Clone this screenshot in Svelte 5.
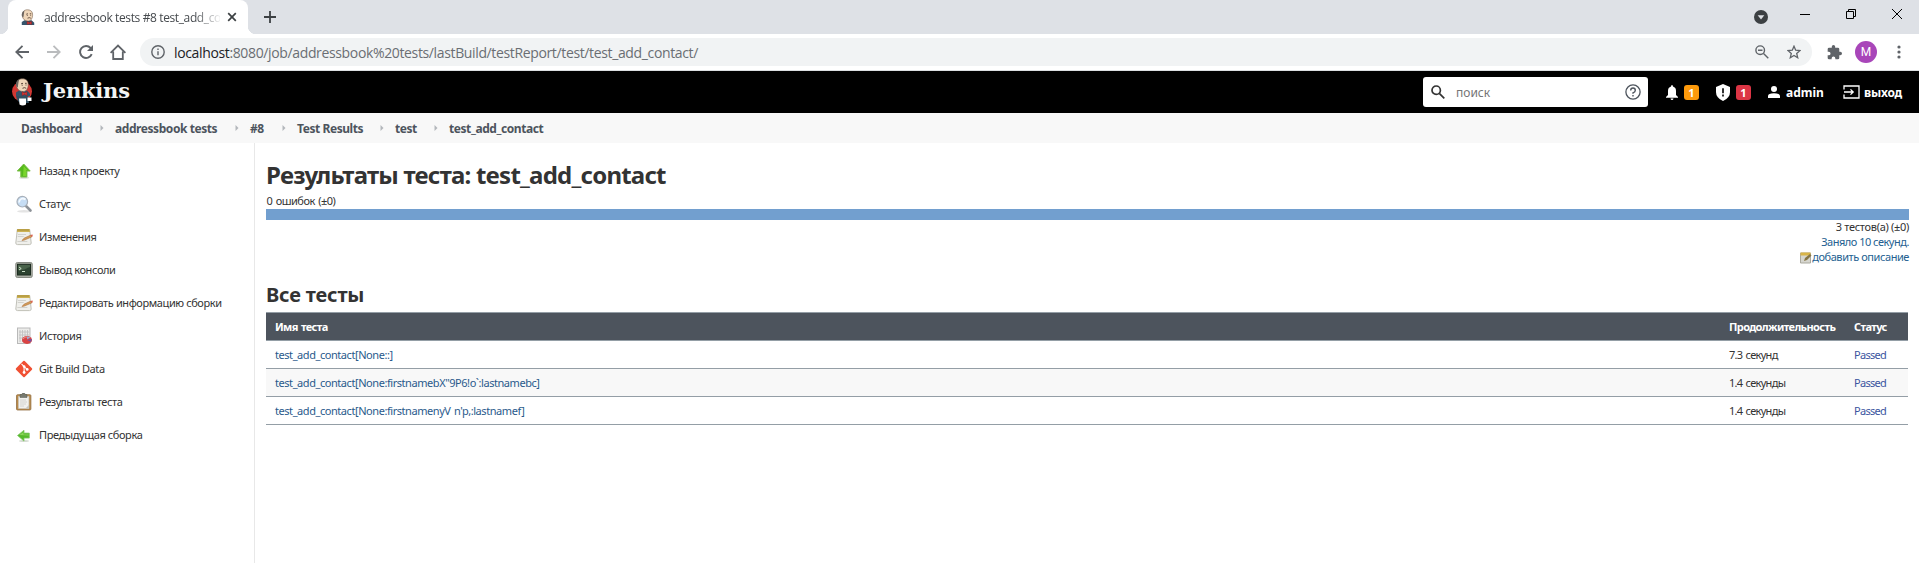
<script>
  const crumbs = [
    ['Dashboard', 61, 18], ['addressbook tests', 102, 18], ['#8', 14, 18],
    ['Test Results', 65, 18], ['test', 22, 17], ['test_add_contact', 95, 0]
  ];
  const tasks = [
    ['up', 'Назад к проекту'], ['search', 'Статус'], ['note', 'Изменения'],
    ['terminal', 'Вывод консоли'], ['note', 'Редактировать информацию сборки'],
    ['graph', 'История'], ['git', 'Git Build Data'], ['clip', 'Результаты теста'],
    ['left', 'Предыдущая сборка']
  ];
  const rows = [
    ['test_add_contact[None::]', '7.3 секунд'],
    ['test_add_contact[None:firstnamebX"9P6!o`:lastnamebc]', '1.4 секунды'],
    ["test_add_contact[None:firstnamenyV n'p,:lastnamef]", '1.4 секунды']
  ];
</script>

{#snippet butler()}
  <path d="M3 18v-3.500l3-2 8 0 3 3V18z" fill="#35546b" />
  <path d="M3.500 7C3.500 2.500 6 .8 9.500.8c4 0 6 2.500 5.700 6.200-.2 4-2 6.500-5 6.500C6.500 13.500 3.500 11 3.500 7z" fill="#efd6b9" stroke="#6e5648" stroke-width=".6" />
  <path d="M3.200 8C2.500 4.500 4 2 6.300 1.500 5.500 3 5.500 5 4.800 9.500z" fill="#6a6460" />
  <path d="M8 5.800l2-.5M12 5.300h1.700M8.700 7.200h1M12.500 7h1M9.500 10.300q2-1.300 3.700 0" stroke="#4b352b" stroke-width=".9" fill="none" />
  <path d="M9 13.800l2.500 1.200 2.500-1.200v3.700l-2.500-1-2.500 1z" fill="#d33833" stroke="#841b20" stroke-width=".5" />
{/snippet}

{#snippet icon(name)}
  <svg class="task-icon" width="18" height="18" viewBox="0 0 18 18" fill="none">
    {#if name === 'up'}
      <ellipse cx="9" cy="15.8" rx="5" ry="1" fill="#d7ddd4" />
      <path d="M8.700 2l6.500 7h-3.300v6H5.800V9H2.300z" fill="#55b91d" stroke="#78bd45" />
      <path d="M8.700 4l4 4.200H11V14H8z" fill="#79d52d" />
    {:else if name === 'left'}
      <ellipse cx="9" cy="15" rx="5" ry="1" fill="#d7ddd4" />
      <path d="M2.500 9.500L9 4.200v2.900h5.300v5H9v3z" fill="#55b92b" stroke="#84c86a" stroke-width=".8" />
      <path d="M4.500 9l4-3v2.400h5v1z" fill="#8bd65a" />
    {:else if name === 'search'}
      <ellipse cx="9" cy="16.300" rx="7" ry="1.200" fill="#e4e4e4" />
      <path d="M11 11l4.500 4.500" stroke="#8d9298" stroke-width="2.600" stroke-linecap="round" />
      <circle cx="7.300" cy="6.700" r="5.300" fill="#c6ddf4" stroke="#a8b0ba" stroke-width="1.200" />
      <path d="M4 7.500C4.500 3.500 8 2.500 10.500 4.500" stroke="#f5faff" stroke-width="1.800" />
    {:else if name === 'note'}
      <path d="M2.300 1.500h12.400l1.500 13.500q0 1.600-1.700 1.600H2.500Q.8 16.600.8 15z" fill="#efefeb" stroke="#c0c0b8" />
      <path d="M2.300 1h12.400l.4 3H1.900z" fill="#cdb355" />
      <path d="M3 1v2m2-2v2m2-2v2m2-2v2m2-2v2m2-2v2" stroke="#8b7425" stroke-width=".6" />
      <path d="M3 6.500h8m-8.300 2h6m-6.300 5h10" stroke="#d2d2cd" />
      <path d="M7 12.500l2-2.300L16 7l1 1.800L9.500 12z" fill="#d39c56" stroke="#ad713e" stroke-width=".6" />
      <path d="M15.500 7.200l1.800-.9.500 1.800-1.300.9z" fill="#d96555" />
    {:else if name === 'terminal'}
      <rect x=".8" y="1.500" width="16.400" height="15" rx="1.500" fill="#aaaea5" stroke="#868a82" />
      <rect x="2.500" y="3.300" width="13" height="10.700" fill="#2c4230" stroke="#1d2c21" />
      <path d="M3 9c6 1 8-2 12-3V4H3z" fill="#486249" />
      <path d="M4 6l2.200 1.500L4 9M7 10.500h3" stroke="#dcf1d8" stroke-width=".9" />
    {:else if name === 'graph'}
      <rect x="2.500" y="1" width="12.500" height="15.500" fill="#ececea" stroke="#b9b9b9" />
      <path d="M5 3v12M7.500 3v12M10 3v12M12.500 3v12M4 5h10M4 8h10M4 11h10" stroke="#c2c2c2" stroke-width=".9" />
      <ellipse cx="12" cy="13" rx="5" ry="3.900" fill="#d94343" />
      <path d="M12 12.500V9.200l3.600 1.200z" fill="#9fa7cc" />
      <path d="M12 13l5-1-1 3z" fill="#7652a0" />
      <path d="M8 12q2-2.500 4-2" stroke="#ee8e85" />
    {:else if name === 'git'}
      <rect x="2.900" y="2.900" width="12.200" height="12.200" rx="1" transform="rotate(45 9 9)" fill="#f05033" />
      <path d="M6.500 3.800l2.600 2.800v6M9.300 6.600l3 3" stroke="#fff" stroke-width="1.100" />
      <g fill="#fff"><circle cx="9.100" cy="6.500" r="1.300" /><circle cx="9.100" cy="12.500" r="1.400" /><circle cx="12.200" cy="9.400" r="1.400" /></g>
    {:else}
      <rect x="1.500" y="1.700" width="14.400" height="15.300" rx="1" fill="#b98a49" stroke="#937044" stroke-width=".8" />
      <path d="M3.500 3.300h10.400v12.200H3.500z" fill="#f1f1ee" stroke="#c9c9c5" stroke-width=".6" />
      <path d="M5 1.500h2L7.500 0h2L10 1.500h2v3H5z" fill="#777a70" stroke="#55584f" stroke-width=".5" />
      <path d="M5 7h6M5 9h7M5 11h6M5 13h4" stroke="#d4d4d0" />
      <path d="M10.500 15.500l3.400-3.400v3.400z" fill="#c5c5bf" />
    {/if}
  </svg>
{/snippet}

<div class="page">
  <div class="tabs">
    <div class="tab">
      <svg class="favicon" width="16" height="17" viewBox="1 0 18 19">{@render butler()}</svg>
      <span class="tab-title">addressbook tests #8 test_add_co</span>
      <svg class="close" width="10" height="10" viewBox="0 0 10 10"><path d="M1.200 1.200l7.600 7.600m0-7.600L1.200 8.800" stroke="#3c4043" stroke-width="1.700" /></svg>
    </div>
    <svg class="plus" width="14" height="14" viewBox="0 0 14 14"><path d="M7 1v12M1 7h12" stroke="#3c4043" stroke-width="1.800" /></svg>
    <div class="window">
      <svg width="14" height="14" viewBox="0 0 14 14"><circle cx="7" cy="7" r="7" fill="#3c4043" /><path d="M3.700 5.300h6.600L7 9.500z" fill="#dee1e6" /></svg>
      <svg width="10" height="10" viewBox="0 0 10 10"><path d="M0 5.500h10" stroke="#000" /></svg>
      <svg width="10" height="10" viewBox="0 0 10 10" fill="none" stroke="#000"><path d="M.5 2.500h7v7h-7zM2.500 2.500v-2h7v7h-2" /></svg>
      <svg width="10" height="10" viewBox="0 0 10 10"><path d="M0 0l10 10m0-10L0 10" stroke="#000" /></svg>
    </div>
  </div>

  <div class="toolbar">
    <svg width="14" height="14" viewBox="0 0 14 14" fill="none" stroke="#5f6368" stroke-width="1.800"><path d="M14 7H1.500M7.500 .8L1.300 7l6.200 6.200" /></svg>
    <svg width="14" height="14" viewBox="0 0 14 14" fill="none" stroke="#babcbe" stroke-width="1.800"><path d="M0 7h12.500M6.500 .8L12.700 7l-6.200 6.200" /></svg>
    <svg width="14" height="14" viewBox="0 0 14 14" fill="none" stroke="#5f6368" stroke-width="1.900"><path d="M12.700 9.200A6 6 0 1 1 11.600 3L13 4.800" /><path d="M14 0v6H8z" fill="#5f6368" stroke="none" /></svg>
    <svg width="16" height="16" viewBox="0 0 16 16" fill="none" stroke="#5f6368" stroke-width="1.800"><path d="M.6 8.800L8 1.500l7.400 7.300M3.200 7.500V15h9.600V7.500" /></svg>
    <div class="address">
      <svg width="14" height="14" viewBox="0 0 14 14" fill="none" stroke="#5f6368" stroke-width="1.400"><circle cx="7" cy="7" r="6.200" /><path d="M7 6.300v4M7 3.500v1.500" /></svg>
      <span class="url"><b>localhost</b>:8080/job/addressbook%20tests/lastBuild/testReport/test/test_add_contact/</span>
      <svg width="14" height="14" viewBox="0 0 14 14" fill="none" stroke="#5f6368" stroke-width="1.400"><circle cx="5.200" cy="5.200" r="4.300" /><path d="M8.500 8.500l4.800 4.800M3 5.200h4.500" /></svg>
      <svg class="star" width="14" height="14" viewBox="0 0 14 14" fill="none" stroke="#5f6368" stroke-width="1.300"><path d="M7 1.200l1.700 4 4.300.4-3.300 2.800 1 4.300L7 10.400l-3.700 2.300 1-4.300L1 5.600l4.300-.4z" /></svg>
    </div>
    <svg class="puzzle" width="15" height="15" viewBox="1 1 22 22" fill="#5f6368"><path d="M20.500 11H19V7a2 2 0 0 0-2-2h-4V3.500a2.500 2.500 0 0 0-5 0V5H4a2 2 0 0 0-2 2v3.800h1.500a2.700 2.700 0 0 1 0 5.400H2V20a2 2 0 0 0 2 2h3.800v-1.500a2.700 2.700 0 0 1 5.400 0V22H17a2 2 0 0 0 2-2v-4h1.500a2.500 2.500 0 0 0 0-5z" /></svg>
    <span class="avatar">M</span>
    <svg class="dots" width="4" height="14" viewBox="0 0 4 14" fill="#5f6368"><circle cx="2" cy="2" r="1.600" /><circle cx="2" cy="7" r="1.600" /><circle cx="2" cy="12" r="1.600" /></svg>
  </div>

  <header>
    <svg class="logo" width="22" height="30" viewBox="0 0 22 30">
      <circle cx="11" cy="14.500" r="10" fill="#d33833" />
      <path d="M5 17l5-2 7 1 1 10H9q-4-3-4-9z" fill="#335061" />
      <g transform="translate(2 1)">{@render butler()}</g>
      <path d="M8 21.500h7v6q-3.500 2-6.500 0zM16.500 20.500h4v3.500h-4z" fill="#fff" />
    </svg>
    <span class="brand">Jenkins</span>
    <div class="search">
      <svg width="14" height="14" viewBox="0 0 14 14" fill="none" stroke="#333" stroke-width="1.700"><circle cx="5.200" cy="5.200" r="4.200" /><path d="M8.300 8.300l5 5" /></svg>
      <span>поиск</span>
      <svg width="16" height="16" viewBox="0 0 16 16" fill="none" stroke="#4d545d" stroke-width="1.300"><circle cx="8" cy="8" r="7.100" /><path d="M5.700 6.500Q5.700 4 8 4t2.300 2.200Q10.300 8 8 8.800v1M8 11v1.500" stroke-width="1.400" /></svg>
    </div>
    <svg class="bell" width="12" height="15" viewBox="0 0 12 15" fill="#fff"><path d="M6 0q1 0 1 1.600 3 1 3 4.400v4l2 2v.8H0V12l2-2V6q0-3.400 3-4.400Q5 0 6 0zM4.500 13.400h3Q7.300 15 6 15t-1.500-1.600z" /></svg>
    <span class="badge amber">1</span>
    <svg class="shield" width="14" height="17" viewBox="0 0 14 17"><path d="M7 0l7 3v5q0 6-7 9-7-3-7-9V3z" fill="#fff" /><path d="M7 4.300v5M7 10.600v1.800" stroke="#000" stroke-width="1.600" /></svg>
    <span class="badge red">1</span>
    <svg class="user" width="12" height="12" viewBox="0 0 12 12" fill="#fff"><circle cx="6" cy="3" r="3" /><path d="M0 12v-2q0-2.800 6-2.800T12 10v2z" /></svg>
    <span class="admin">admin</span>
    <svg class="exit" width="17" height="14" viewBox="0 0 17 14" fill="none" stroke="#fff" stroke-width="1.300"><path d="M1 4.500V1h15v12H1V9.500M1 7h9M7.500 4.400L10.200 7l-2.700 2.600" /></svg>
    <span class="logout">выход</span>
  </header>

  <nav>
    {#each crumbs as [label, width, gap]}
      <span class="crumb" style="width:{width}px">{label}</span>
      {#if gap}
        <svg style="margin-left:{gap}px" width="4" height="6" viewBox="0 0 4 6"><path d="M.5 0L3.500 3 .5 6z" fill="#b3b7bb" /></svg>
      {/if}
    {/each}
  </nav>

  <div class="body">
    <aside>
      {#each tasks as [name, label]}
        <div class="task">{@render icon(name)}<span>{label}</span></div>
      {/each}
    </aside>
    <main>
      <h1>Результаты теста: test_add_contact</h1>
      <div class="fails">0 ошибок (±0)</div>
      <div class="bar"></div>
      <div class="summary">
        <div><span class="total">3 тестов(а) (±0)</span></div>
        <div><span class="link took">Заняло 10 секунд.</span></div>
        <div>
          <svg class="edit" width="12" height="12" viewBox="0 0 12 12"><path d="M.5 1h10v10H.5z" fill="#d6d6cf" stroke="#aaa99e" /><path d="M.5.5h10v3H.5z" fill="#d9b548" /><path d="M4 9l1-3 5-4 1.500 1.500L7 8z" fill="#857544" /></svg><span class="link describe">добавить описание</span>
        </div>
      </div>
      <h2>Все тесты</h2>
      <table>
        <thead><tr><th>Имя теста</th><th class="dur">Продолжительность</th><th class="st">Статус</th></tr></thead>
        <tbody>
          {#each rows as [name, dur]}
            <tr><td class="name">{name}</td><td>{dur}</td><td class="passed">Passed</td></tr>
          {/each}
        </tbody>
      </table>
    </main>
  </div>
</div>

<style>
  :global(body) { background: #fff; }
  .page { width: 1919px; height: 563px; overflow: hidden; font-family: "Noto Sans", sans-serif; font-size: 11px; color: #333; box-sizing: border-box; display: flex; flex-direction: column; }
  svg { display: block; flex: none; }
  span { white-space: nowrap; }

  .tabs { height: 34px; flex: none; background: #dee1e6; display: flex; align-items: flex-start; padding-left: 8px; }
  .tab { width: 240px; height: 34px; box-sizing: border-box; background: #fff; border-radius: 8px 8px 0 0; display: flex; align-items: center; padding-left: 12px; font: 12px "Open Sans", sans-serif; color: #45494d; position: relative; }
  .tab::before, .tab::after { content: ""; position: absolute; bottom: 0; width: 8px; height: 8px; }
  .tab::before { left: -8px; background: radial-gradient(circle at 0 0, #dee1e6 8px, #fff 8.5px); }
  .tab::after { right: -8px; background: radial-gradient(circle at 100% 0, #dee1e6 8px, #fff 8.5px); }
  .tab-title { width: 176px; margin-left: 8px; mask-image: linear-gradient(to right, #000 150px, transparent 178px); letter-spacing: -.38px; }
  .close { margin-left: 7px; }
  .plus { margin: 10px 0 0 15px; }
  .window { margin: 7px 17px 0 auto; display: flex; align-items: center; }
  .window svg + svg { margin-left: 36px; }
  .window svg:first-child { position: relative; top: 3px; margin-right: -4px; }

  .toolbar { height: 36px; flex: none; border-bottom: 1px solid #dcdfe1; display: flex; align-items: center; padding-left: 15px; gap: 18px; }
  .toolbar > svg:nth-child(3) { margin-right: -1px; }
  .address { flex: none; width: 1672px; margin-left: -4px; height: 28px; border-radius: 14px; background: #f1f3f4; display: flex; align-items: center; box-sizing: border-box; padding: 0 11px; }
  .url { font: 14px "Open Sans", sans-serif; color: #6a6e73; margin: 0 auto 0 9px; letter-spacing: -.36px; }
  .url b { font-weight: 400; color: #202124; }
  .star { margin-left: 18px; }
  .puzzle { margin-left: -3px; }
  .avatar { width: 22px; height: 22px; border-radius: 50%; background: #a846b9; color: #fff; font: 12px/22px Roboto, sans-serif; text-align: center; margin-left: -5px; }
  .dots { margin-left: 2px; }

  header { height: 42px; flex: none; background: #000; color: #fff; display: flex; align-items: center; padding-left: 11px; font-weight: 700; font-size: 12px; }
  .brand { font: 700 21px/42px "DejaVu Serif", serif; margin-left: 10px; letter-spacing: -.2px; position: relative; top: -1px; color: #f4f4f4; }
  .search { margin-left: auto; width: 225px; height: 30px; background: #fff; border-radius: 3px; box-sizing: border-box; padding: 0 7px 0 8px; display: flex; align-items: center; }
  .search span { font-weight: 400; color: #757575; margin: 0 auto 0 11px; }
  .bell { margin-left: 18px; }
  .badge { width: 15px; height: 15px; border-radius: 3px; text-align: center; line-height: 15px; margin-left: 6px; font-size: 11px; }
  .amber { background: #fe9a0b; }
  .red { background: #dc3545; }
  .shield { margin-left: 17px; }
  .user { margin-left: 17px; }
  .admin { width: 36px; margin-left: 6px; }
  .exit { margin-left: 21px; }
  .logout { width: 39px; margin: 0 16px 0 4px; letter-spacing: -.2px; }

  nav { height: 30px; flex: none; background: #f8f8f8; display: flex; align-items: center; padding-left: 21px; font-weight: 700; font-size: 12px; color: #4d545d; letter-spacing: -.43px; }
  nav svg + .crumb { margin-left: 11px; }

  .body { flex: 1; display: flex; }
  aside { width: 255px; box-sizing: border-box; border-right: 1px solid #e8e8e8; padding: 11px 0 0 15px; letter-spacing: -.4px; }
  .task { height: 33px; display: flex; align-items: center; gap: 6px; }
  main { flex: 1; padding: 18px 10px 0 11px; }
  h1 { font: 700 24px/27px "Noto Sans", sans-serif; margin: 0 0 1px; white-space: nowrap; letter-spacing: -.78px; }
  h2 { font: 700 20px/24px "Noto Sans", sans-serif; margin: 19px 0 5px; letter-spacing: -.15px; }
  .fails { height: 20px; line-height: 23px; letter-spacing: -.5px; word-spacing: 1px; padding-left: .5px; }
  .bar { height: 11px; background: #729fcf; }
  .summary { text-align: right; line-height: 15px; margin-top: -1px; }
  .summary div { height: 15px; display: flex; justify-content: flex-end; align-items: center; }
  .link { color: #255f91; }
  .edit { margin-top: 3px; }
  .total { letter-spacing: -.3px; }
  .took { letter-spacing: -.5px; }
  .describe { letter-spacing: -.43px; }
  table { width: 1642px; border-collapse: collapse; table-layout: fixed; letter-spacing: -.7px; word-spacing: 1px; }
  th, td { height: 26px; padding: 0 0 1px 9px; line-height: 15px; text-align: left; border-top: 1px solid #949ea6; border-bottom: 1px solid #949ea6; white-space: nowrap; }
  th { background: #4d545d; color: #fff; letter-spacing: -.62px; }
  .dur { width: 116px; }
  .st { width: 54px; }
  tbody tr:nth-child(even) { background: #f8f8f8; }
  .name { color: #2a5a8c; letter-spacing: -.44px; }
  .passed { color: #3b55a0; }
</style>
